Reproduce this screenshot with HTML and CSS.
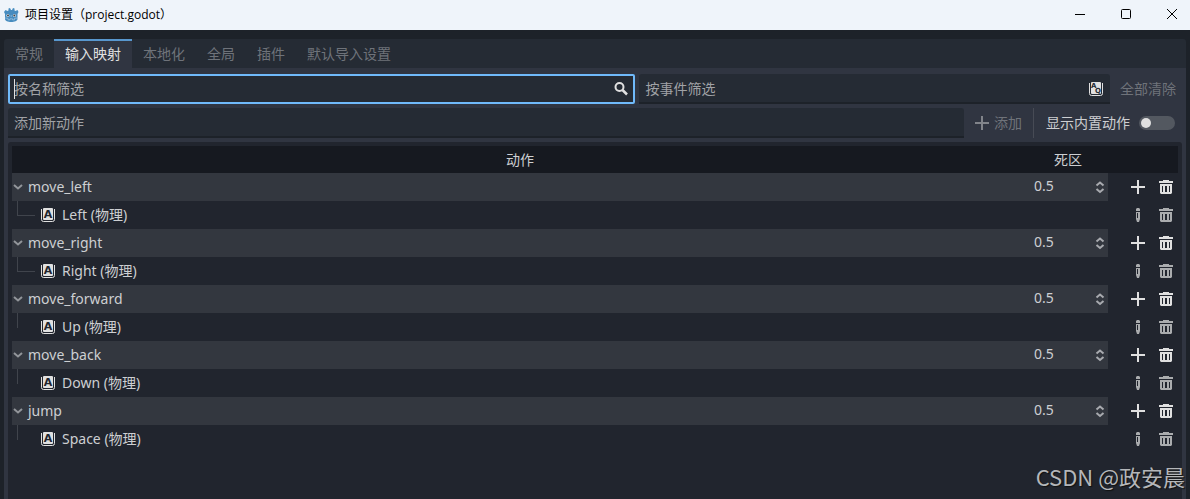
FILE: index.html
```html
<!DOCTYPE html>
<html lang="zh-CN">
<head>
    <meta charset="UTF-8">
    <meta name="viewport" content="width=device-width, initial-scale=1.0">
    <title>项目设置（project.godot）</title>
    <link rel="stylesheet" href="styles.css">
</head>
<body>
    <!-- shared icons -->
    <svg class="defs" aria-hidden="true">
        <symbol id="i-arrow" viewBox="0 0 10 8"><path d="M1 2 5 5.500 9 2" fill="none" stroke="currentColor" stroke-width="2"/></symbol>
        <symbol id="i-add" viewBox="0 0 16 16"><path d="M1 8h14M8 1v14" stroke="currentColor" stroke-width="2"/></symbol>
        <symbol id="i-trash" viewBox="0 0 16 16"><path fill="currentColor" fill-rule="evenodd" d="M5 1h6v1h4v2H1V2h4zM2 5h12v9l-1 1H3l-1-1zM4 7v6h1V7zM7 7v6h2V7zM11 7v6h1V7z"/></symbol>
        <symbol id="i-edit" viewBox="0 0 16 16"><path fill="currentColor" fill-rule="evenodd" d="M7 1h2l1 1v2H6V2zM6 5h4v7l-1 3H7l-1-3zM7 6v5h1V6z"/></symbol>
        <symbol id="i-updown" viewBox="0 0 10 14"><path d="M1.500 5.500 5 2.500 8.500 5.500M1.500 9 5 12 8.500 9" fill="none" stroke="currentColor" stroke-width="2"/></symbol>
    </svg>

    <header class="titlebar">
        <svg class="logo" viewBox="0 0 16 16">
            <path fill="#478cbf" d="M1 5 2.500 3 4.500 4 5.500 3.500 5.500 1.500 7 1 8 3h1l1-2 1.500.5v2l1 .5 2-1L15.500 5 14.500 7v5c0 2-3 3-6.300 3S2 14 2 12V7z"/>
            <circle cx="4.900" cy="8.500" r="1.500" fill="#dcebf5"/><circle cx="11.400" cy="8.500" r="1.500" fill="#dcebf5"/>
            <circle cx="5" cy="8.500" r="1" fill="#414042"/><circle cx="11.300" cy="8.500" r="1" fill="#414042"/>
            <path d="M8.200 8v2M2 11l3 .3v1.500h2v-1h2.500v1h2v-1.500l3-.3" fill="none" stroke="#b5d2e8" stroke-width=".6"/>
        </svg>
        <h1>项目设置（project.godot）</h1>
        <div class="window-buttons">
            <button aria-label="最小化"><svg viewBox="0 0 10 10"><path d="M0 4.500h10"/></svg></button>
            <button aria-label="最大化"><svg viewBox="0 0 10 10"><rect x=".5" y="-.5" width="9" height="9" rx="1"/></svg></button>
            <button aria-label="关闭"><svg viewBox="0 0 10 10"><path d="M0-1 10 9M10-1 0 9"/></svg></button>
        </div>
    </header>

    <main class="window">
        <nav class="tabs">
            <button>常规</button>
            <button class="active">输入映射</button>
            <button>本地化</button>
            <button>全局</button>
            <button>插件</button>
            <button>默认导入设置</button>
        </nav>

        <section class="panel">
            <div class="row">
                <label class="field focused name-filter">
                    <input type="text" placeholder="按名称筛选" aria-label="按名称筛选">
                    <svg class="icon" viewBox="0 0 16 16"><circle cx="6.500" cy="6" r="4" fill="none" stroke="currentColor" stroke-width="2"/><path d="M9.500 9 14 13.500" stroke="currentColor" stroke-width="2.500"/></svg>
                </label>
                <label class="field event-filter">
                    <input type="text" placeholder="按事件筛选" aria-label="按事件筛选">
                    <svg class="icon" viewBox="0 0 16 16">
                        <path d="M1.500 2v10.500a2 2 0 0 0 2 2h9a2 2 0 0 0 2-2V2" fill="none" stroke="currentColor"/>
                        <rect x="3" y="1" width="10" height="12" rx="1" fill="currentColor"/>
                        <text class="key-small" x="3" y="7">A</text>
                        <text class="key-small" x="7" y="12">Q</text>
                    </svg>
                </label>
                <button class="flat clear" disabled>全部清除</button>
            </div>

            <div class="row">
                <label class="field new-action">
                    <input type="text" placeholder="添加新动作" aria-label="添加新动作">
                </label>
                <button class="flat add" disabled><svg class="icon"><use href="#i-add"/></svg>添加</button>
                <label class="builtin">显示内置动作<input type="checkbox" class="toggle"></label>
            </div>

            <div class="tree">
                <table>
                    <colgroup><col><col class="col-deadzone"><col class="col-buttons"></colgroup>
                    <thead>
                        <tr><th>动作</th><th>死区</th><th></th></tr>
                    </thead>
                    <tbody id="actions"></tbody>
                </table>
            </div>
        </section>
    </main>

    <div class="watermark">CSDN @政安晨</div>

<script src="script.js"></script>
</body>
</html>
```
FILE: styles.css
```css
* {
    box-sizing: border-box;
}

body {
    margin: 0;
    height: 100vh;
    display: flex;
    flex-direction: column;
    overflow: hidden;
    background-color: #1d2229;
    color: #cdcfd2;
    font-family: "Noto Sans", "Noto Sans CJK SC", sans-serif;
    font-size: 14px;
    line-height: 20px;
}

button, input {
    font: inherit;
    color: inherit;
    background: none;
    border: none;
    padding: 0;
    margin: 0;
}

svg {
    display: block;
    flex: none;
}

.defs {
    position: absolute;
    width: 0;
    height: 0;
}

.icon {
    width: 16px;
    height: 16px;
    color: #e0e0e0;
}

/* title bar */
.titlebar {
    display: flex;
    align-items: center;
    flex: none;
    height: 30px;
    padding-left: 3px;
    background-color: #eff4fa;
    color: #000;
}

.logo {
    width: 16px;
    height: 16px;
    margin-right: 6px;
}

.titlebar h1 {
    margin: 0;
    font-family: "Open Sans", "Noto Sans CJK SC", sans-serif;
    font-size: 12px;
    font-weight: normal;
}

.window-buttons {
    display: flex;
    margin-left: auto;
}

.window-buttons button {
    display: flex;
    align-items: center;
    justify-content: center;
    width: 46px;
    height: 30px;
    padding-left: 10px;
}

.window-buttons svg {
    width: 10px;
    height: 10px;
    fill: none;
    stroke: #000;
    overflow: visible;
}

/* tabs */
.window {
    flex: 1;
    display: flex;
    flex-direction: column;
    min-height: 0;
    margin: 9px 4px 0;
}

.tabs {
    display: flex;
    flex: none;
    height: 29px;
    background-color: #252b34;
    border-radius: 3px 3px 0 0;
}

.tabs button {
    padding: 0 11px 2px;
    color: #6f737a;
    border-top: 2px solid transparent;
}

.tabs button.active {
    color: #e0e0e0;
    background-color: #303541;
    border-top-color: #5897ce;
}

.panel {
    flex: 1;
    display: flex;
    flex-direction: column;
    gap: 4px;
    min-height: 0;
    padding: 6px 4px 0;
    background-color: #303541;
}

/* filters */
.row {
    display: flex;
    gap: 4px;
    height: 30px;
    flex: none;
}

.field {
    position: relative;
    display: flex;
    align-items: center;
    background-color: #252b34;
    box-shadow: inset 0 -2px #1d2229;
    border-radius: 3px 3px 0 0;
}

.field input {
    flex: 1;
    min-width: 0;
    padding-left: 6px;
    outline: none;
    caret-color: #e0e0e0;
}

.field input::placeholder {
    color: #a0a2a6;
    opacity: 1;
}

.field .icon {
    margin-right: 6px;
}

.field.focused {
    box-shadow: inset 0 0 0 2px #70bafa;
    border-radius: 2px;
}

/* text cursor */
.field.focused::before {
    content: "";
    position: absolute;
    left: 6px;
    width: 1px;
    height: 20px;
    background-color: #e0e0e0;
}

.name-filter {
    flex: 4;
}

.event-filter {
    flex: 3;
}

.new-action {
    flex: 1;
}

.flat {
    display: flex;
    align-items: center;
    gap: 4px;
    color: #6f737a;
}

.flat .icon {
    color: #81848a;
}

.clear {
    padding: 0 6px;
}

.add {
    padding: 0 7px 0 6px;
}

.builtin {
    display: flex;
    align-items: center;
    gap: 9px;
    padding: 0 7px 0 12px;
    border-left: 1px solid #474b55;
}

.toggle {
    appearance: none;
    width: 36px;
    height: 14px;
    padding: 2px;
    border-radius: 7px;
    background-color: #535860;
}

.toggle::before {
    content: "";
    display: block;
    width: 10px;
    height: 10px;
    border-radius: 50%;
    background-color: #e0e0e0;
}

/* action tree */
.tree {
    flex: 1;
    min-height: 0;
    padding: 4px 4px 0;
    background-color: #21252e;
    border-radius: 3px 3px 0 0;
}

table {
    width: 100%;
    table-layout: fixed;
    border-collapse: collapse;
}

.col-deadzone {
    width: 80px;
}

.col-buttons {
    width: 70px;
}

th {
    height: 27px;
    padding: 0;
    font-weight: normal;
    background-color: #161920;
}

td {
    height: 28px;
    padding: 0;
}

.action td:not(:last-child) {
    background-color: #33373f;
}

.cell {
    display: flex;
    align-items: center;
    height: 28px;
}

.fold svg {
    width: 10px;
    height: 8px;
    margin: 0 5px 0 1px;
    color: #92959a;
}

.branch {
    align-self: flex-start;
    width: 18px;
    height: 15px;
    margin: 0 5px;
    border-left: 1px solid #40444c;
}

.branch.joined {
    border-bottom: 1px solid #40444c;
}

.event .cell > .icon {
    margin-right: 6px;
}

.key-letter {
    font: bold 11px "DejaVu Sans", sans-serif;
    fill: #21252e;
}

.key-small {
    font: bold 7px "DejaVu Sans", sans-serif;
    fill: #252b34;
}

.deadzone input {
    width: 60px;
    padding: 0 0 2px 6px;
    appearance: textfield;
}

.deadzone input::-webkit-inner-spin-button {
    display: none;
}

.deadzone svg {
    width: 10px;
    height: 14px;
    margin-left: 7px;
    color: #a8aaaf;
}

.tools {
    justify-content: flex-end;
    gap: 12px;
    padding-right: 4px;
}

.event .tools .icon {
    color: #aaacae;
}

.watermark {
    position: absolute;
    right: 5px;
    bottom: 7px;
    font-family: "Noto Sans CJK SC", sans-serif;
    font-size: 22px;
    line-height: 32px;
    color: #b4b6b9;
    text-shadow: 1px 1px 1px #111;
}
```
FILE: script.js
```js
const actions = [
  { name: "move_left", key: "Left", joined: true },
  { name: "move_right", key: "Right", joined: true },
  { name: "move_forward", key: "Up" },
  { name: "move_back", key: "Down" },
  { name: "jump", key: "Space" }
];

const keyIcon = `<svg class="icon" viewBox="0 0 16 16">
  <path d="M1.5 2v10.5a2 2 0 0 0 2 2h9a2 2 0 0 0 2-2V2" fill="none" stroke="currentColor"/>
  <rect x="3" y="1" width="10" height="12" rx="1" fill="currentColor"/>
  <text class="key-letter" x="8" y="11" text-anchor="middle">A</text>
</svg>`;

function icon(id) {
  return `<svg class="icon"><use href="#i-${id}"/></svg>`;
}

document.getElementById("actions").innerHTML = actions.map(a => `
  <tr class="action">
    <td><div class="cell"><button class="fold" aria-label="折叠"><svg><use href="#i-arrow"/></svg></button>${a.name}</div></td>
    <td><div class="cell deadzone"><input type="number" step="0.1" value="0.5" aria-label="${a.name} 死区"><svg><use href="#i-updown"/></svg></div></td>
    <td><div class="cell tools"><button aria-label="添加事件">${icon("add")}</button><button aria-label="移除动作">${icon("trash")}</button></div></td>
  </tr>
  <tr class="event">
    <td><div class="cell"><span class="branch${a.joined ? " joined" : ""}"></span>${keyIcon}${a.key} (物理)</div></td>
    <td></td>
    <td><div class="cell tools"><button aria-label="编辑事件">${icon("edit")}</button><button aria-label="移除事件">${icon("trash")}</button></div></td>
  </tr>`).join("");
```
